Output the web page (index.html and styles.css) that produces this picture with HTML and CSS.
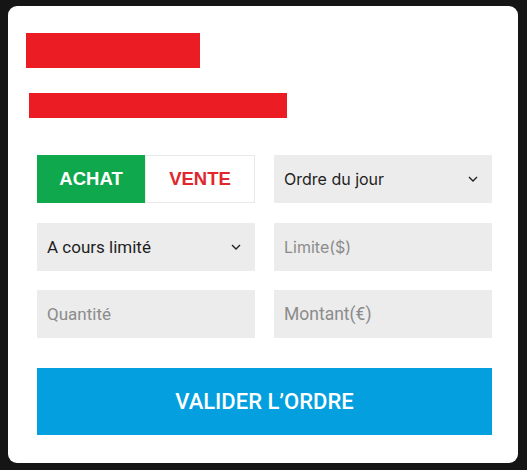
FILE: index.html
```html
<!DOCTYPE html>
<html lang="fr">
<head>
<meta charset="utf-8">
<title>Ordre</title>
<link rel="stylesheet" href="styles.css">
</head>
<body>
<div class="card">
  <div class="redact redact-title"></div>
  <div class="redact redact-sub"></div>
  <div class="form">
    <div class="toggle">
      <div class="tab tab-buy">ACHAT</div>
      <div class="tab tab-sell">VENTE</div>
    </div>
    <div class="field select inter">
      <span>Ordre du jour</span>
      <svg class="chev" width="10" height="6" viewBox="0 0 10 6"><path d="M1 1l4 4 4-4" fill="none" stroke="#222" stroke-width="1.4"/></svg>
    </div>
    <div class="field select large">
      <span>A cours limité</span>
      <svg class="chev" width="10" height="6" viewBox="0 0 10 6"><path d="M1 1l4 4 4-4" fill="none" stroke="#222" stroke-width="1.4"/></svg>
    </div>
    <div class="field placeholder inter">Limite($)</div>
    <div class="field placeholder large">Quantité</div>
    <div class="field placeholder larger">Montant(€)</div>
    <div class="submit">VALIDER L’ORDRE</div>
  </div>
</div>
</body>
</html>
```

FILE: styles.css
```css
html, body {
  margin: 0;
  padding: 0;
}
body {
  background: #151515;
  width: 527px;
  height: 470px;
  padding-top: 6px;
  box-sizing: border-box;
  font-family: Roboto, "Liberation Sans", sans-serif;
}
.card {
  margin-left: 8px;
  width: 510px;
  height: 457px;
  background: #ffffff;
  border-radius: 9px;
  box-sizing: border-box;
  padding-top: 27px;
  overflow: hidden;
}
.redact {
  background: #ec1c24;
}
.redact-title {
  margin-left: 18px;
  width: 174px;
  height: 35px;
}
.redact-sub {
  margin-top: 25px;
  margin-left: 21px;
  width: 258px;
  height: 25px;
}
.form {
  margin-top: 37px;
  margin-left: 29px;
  width: 455px;
  display: grid;
  grid-template-columns: 218px 218px;
  grid-auto-rows: 48px;
  column-gap: 19px;
  row-gap: 19.5px;
}
.toggle {
  display: flex;
}
.tab {
  flex: 1;
  display: flex;
  align-items: center;
  justify-content: center;
  font-family: "Liberation Sans", Arial, sans-serif;
  font-size: 18.5px;
  font-weight: 700;
}
.tab-buy {
  background: #10a84c;
  color: #ffffff;
}
.tab-sell {
  background: #ffffff;
  color: #e0272d;
  border: 1px solid #e9e9e9;
}
.field {
  background: #ececec;
  display: flex;
  align-items: center;
  padding: 0 11px 0 10px;
  font-size: 16px;
  color: #1e1e1e;
}
.inter {
  font-family: Inter, Roboto, sans-serif;
}
.large {
  font-size: 17px;
}
.larger {
  font-size: 17.5px;
}
.select {
  justify-content: space-between;
  padding-right: 14px;
}
.placeholder {
  color: #8b8b8b;
}
.chev {
  display: block;
}
.submit {
  grid-column: 1 / span 2;
  margin-top: 10px;
  height: 67px;
  background: #039fdf;
  color: #ffffff;
  display: flex;
  align-items: center;
  justify-content: center;
  font-size: 22px;
  font-weight: 500;
}
```
